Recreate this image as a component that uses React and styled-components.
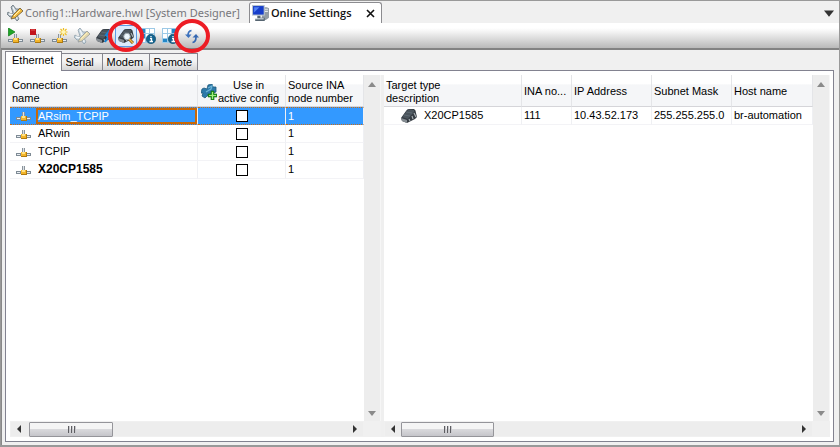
import React, { useState } from 'react';
import styled, { createGlobalStyle, css } from 'styled-components';

const GlobalStyle = createGlobalStyle`
  *, *::before, *::after { box-sizing: border-box; }
  html, body, #root { height: 100%; }
  body {
    margin: 0;
    background: #f0f0f0;
    color: #000;
    font: 11px/13px "Liberation Sans", Arial, sans-serif;
  }
  button, input { font: inherit; color: inherit; margin: 0; padding: 0; }
`;

const Window = styled.main`
  display: flex;
  flex-direction: column;
  height: 100vh;
  border: 1px solid #999;
  border-bottom-width: 2px;
  background: #f0f0f0;
`;

const DocumentTabs = styled.nav`
  display: flex;
  align-items: flex-end;
  flex: none;
  height: 22px;
  padding: 1px 5px 0;
  font: 11px/20px "Noto Sans", "Open Sans", sans-serif;
`;

const DocumentTab = styled.button`
  display: flex;
  align-items: center;
  gap: 2px;
  height: 21px;
  border: 1px solid transparent;
  border-bottom: 0;
  background: none;
  color: #77777b;
  white-space: nowrap;
  ${p => p.$active && css`
    margin-left: 8px;
    padding: 0 4px 0 2px;
    border-color: #8c8c90;
    border-radius: 3px 3px 0 0;
    background: #fff;
    color: #111;
    font-family: "Open Sans", sans-serif;
    font-weight: 600;
  `}
`;

const CloseMark = styled.svg`
  margin-left: 9px;
`;

const TabListButton = styled.button`
  display: flex;
  align-items: center;
  height: 21px;
  margin-left: auto;
  border: 0;
  background: none;
`;

const Toolbar = styled.div`
  display: flex;
  align-items: center;
  flex: none;
  height: 27px;
  padding: 0 4px;
  border-bottom: 2px solid #828282;
  background: linear-gradient(#fff 20%, #f1f1f1 38%, #b9b9b9);
`;

const ToolButton = styled.button`
  position: relative;
  display: grid;
  place-items: center;
  width: 22px;
  height: 22px;
  border: 1px solid ${p => (p.$pressed ? '#5b9be6' : 'transparent')};
  background: ${p => (p.$pressed ? '#dcebfc' : 'none')};
`;

const HighlightRing = styled.span`
  position: absolute;
  z-index: 2;
  inset: ${p => (p.$large ? '-7px -8px' : '-6px -8px')};
  border: 4px solid #ed1c24;
  border-radius: 50%;
  pointer-events: none;
`;

const Body = styled.section`
  display: flex;
  flex-direction: column;
  flex: 1;
  min-height: 0;
  padding: 1px 5px 3px 3px;
  border-left: 1px solid #888;
`;

const PageTabs = styled.div`
  display: flex;
  align-items: flex-end;
  flex: none;
  height: 19px;
`;

const PageTab = styled.button`
  min-width: 47px;
  height: 17px;
  padding: 0 5px 0 4px;
  border: 1px solid #85858d;
  border-width: 1px 1px 0 0;
  background: linear-gradient(#f3f3f3 45%, #d6d6d6);
  text-align: left;
  &:nth-child(2) { min-width: 41px; }
  ${p => p.$active && css`
    z-index: 1;
    height: 20px;
    margin-bottom: -1px;
    padding: 0 7px 2px 6px;
    border-left-width: 1px;
    background: #fff;
  `}
`;

const Page = styled.div`
  display: flex;
  flex: 1;
  min-height: 0;
  padding: 4px 3px 4px 4px;
  border: 1px solid #828290;
  background: #fff;
`;

const Pane = styled.div`
  display: grid;
  grid-template-columns: minmax(0, 1fr) 17px;
  grid-template-rows: minmax(0, 1fr) 16px;
  min-width: 0;
  flex: ${p => (p.$fixed ? '0 0 371px' : '1')};
`;

const Splitter = styled.div`
  flex: none;
  width: 3px;
  background: #efefef;
`;

const Table = styled.table`
  align-self: start;
  width: 100%;
  border-collapse: separate;
  border-spacing: 0;
  table-layout: fixed;
`;

const Col = styled.col`
  width: ${p => (p.$width ? `${p.$width}px` : 'auto')};
`;

const HeadCell = styled.th`
  height: 32px;
  padding: 2px 2px 0 ${p => (p.$first ? 2 : 3)}px;
  border-right: 1px solid #e4e5e8;
  border-bottom: 1px solid #d5d5d9;
  background: linear-gradient(#fff 30%, #f5f6f8 31%);
  font-weight: 400;
  text-align: ${p => (p.$center ? 'center' : 'left')};
  white-space: nowrap;
`;

const WithIcon = styled.div`
  display: flex;
  align-items: center;
  gap: 1px;
`;

const Cell = styled.td`
  height: 18px;
  padding: 0 0 0 ${p => p.$indent ?? 2}px;
  border-right: 1px solid #eff0f3;
  border-bottom: 1px solid #f3f3f6;
  text-align: ${p => (p.$center ? 'center' : 'left')};
  white-space: nowrap;
`;

const Row = styled.tr`
  ${p => p.$selected && css`
    color: #fff;
    background: #39f;
    ${Cell} {
      border-bottom: 1px dotted #c86c18;
      border-top: 1px dotted #c86c18;
    }
  `}
`;

const NameCell = styled.div`
  display: flex;
  align-items: center;
  height: ${p => (p.$focused ? 16 : 17)}px;
  gap: ${p => p.$gap ?? 4}px;
  svg { flex: none; }
`;

const NameText = styled.span`
  flex: 1;
  height: 17px;
  padding-left: 2px;
  line-height: 17px;
  ${p => p.$bold && css`
    font-weight: 700;
    font-size: 12px;
  `}
  ${p => p.$focused && css`
    height: 16px;
    padding-left: 0;
    border: 2px solid #c86808;
    line-height: 12px;
  `}
`;

const CheckBox = styled.input`
  appearance: none;
  display: block;
  width: 12px;
  height: 12px;
  margin: 0 auto;
  border: 1px solid #000;
  background: #fff;
  &:checked { box-shadow: inset 0 0 0 2px #fff; background: #000; }
`;

const Track = styled.div`
  display: flex;
  align-items: center;
  justify-content: space-between;
  background: #ededed;
  ${p => p.$vertical
    ? css`flex-direction: column; border-right: 1px solid #f6f6f6;`
    : css`border: 1px solid #f0f0f0;`}
`;

const ArrowButton = styled.button`
  display: grid;
  place-items: center;
  width: 16px;
  height: ${p => (p.$vertical ? 17 : 14)}px;
  flex: none;
  border: 0;
  background: none;
`;

const Thumb = styled.button`
  display: grid;
  place-items: center;
  width: ${p => p.$size}px;
  height: 15px;
  margin: 0 auto 0 ${p => p.$offset}px;
  flex: none;
  border: 1px solid #95959a;
  border-radius: 1px;
  background: linear-gradient(#f5f5f5 45%, #d9d9dc 50%, #c5c5ca);
`;

const Corner = styled.div`
  background: #f0f0f0;
`;

const ARROWS = {
  up: 'M4 2 8 7H0Z',
  down: 'M0 2H8L4 7Z',
  left: 'M6 0V8L2 4Z',
  right: 'M2 0 6 4 2 8Z',
};

const Arrow = ({ dir, color = '#707070', size = 8 }) => (
  <svg width={size} height={size} viewBox="0 0 8 8" aria-hidden="true">
    <path d={ARROWS[dir]} fill={color} />
  </svg>
);

function HScroll({ size, offset = 2 }) {
  return (
    <Track>
      <ArrowButton aria-label="Scroll left"><Arrow dir="left" color="#333" /></ArrowButton>
      <Thumb $size={size} $offset={offset} aria-label="Horizontal position">
        <svg width="9" height="7" aria-hidden="true" shapeRendering="crispEdges">
          <path d="M1.500 0V7M4.500 0V7M7.500 0V7" stroke="#5e5e62" />
          <path d="M2.500 0V7M5.500 0V7M8.500 0V7" stroke="#c9c9cd" />
        </svg>
      </Thumb>
      <ArrowButton aria-label="Scroll right"><Arrow dir="right" color="#333" /></ArrowButton>
    </Track>
  );
}

function VScroll() {
  return (
    <Track $vertical>
      <ArrowButton $vertical aria-label="Scroll up"><Arrow dir="up" color="#8a8a8a" /></ArrowButton>
      <ArrowButton $vertical aria-label="Scroll down"><Arrow dir="down" color="#8a8a8a" /></ArrowButton>
    </Track>
  );
}

const Icon = ({ children, size = 16 }) => (
  <svg width={size} height={size} viewBox="0 0 16 16" aria-hidden="true">{children}</svg>
);

const NodeShape = () => (
  <g shapeRendering="crispEdges">
    <rect x="6" y="6" width="3" height="5" fill="#8b949b" />
    <rect x="7" y="6" width="1" height="4" fill="#dbe1e6" />
    <rect x="0" y="11" width="15" height="3" fill="#7f8b95" />
    <rect x="1" y="12" width="3" height="1" fill="#e9eef2" />
    <rect x="11" y="12" width="3" height="1" fill="#e9eef2" />
    <rect x="5" y="10" width="6" height="5" fill="#b07a10" />
    <rect x="5" y="10" width="5" height="4" fill="#f3b52a" />
    <rect x="6" y="10" width="3" height="2" fill="#ffe184" />
  </g>
);

const ConnectionIcon = () => (
  <svg width="16" height="12" viewBox="0 4 16 12" aria-hidden="true"><NodeShape /></svg>
);

const ConnectIcon = () => (
  <Icon><NodeShape /><path d="M.5 0V8L7 4Z" fill="#20a526" stroke="#0c7c16" strokeWidth=".7" /></Icon>
);

const DisconnectIcon = () => (
  <Icon><NodeShape /><rect x="0" y="1" width="6" height="6" fill="#c3161d" /><path d="M1 2H5" stroke="#e05a5a" /></Icon>
);

const NewConnectionIcon = () => (
  <Icon>
    <NodeShape />
    <path d="M11.500 0V8M7.500 4H15.500M8.500 1 14.500 7M14.500 1 8.500 7" stroke="#eebf24" strokeWidth="1.200" />
    <circle cx="11.500" cy="4" r="2" fill="#fff6b8" />
  </Icon>
);

const WrenchIcon = ({ muted }) => (
  <Icon>
    <path d="M4 2 6 0 9 4 12 4 13 7 10 10 12 14 10 16 7 12 3 12 0 9 1 7 4 9 6 8Z" fill={muted ? '#c9d7e0' : '#b4bfc7'} stroke={muted ? '#8fa0ab' : '#67737b'} strokeWidth=".8" />
    <path d="M6 2 9 9 10 14M2 9 6 10" fill="none" stroke="#f3f7f9" strokeWidth="1.300" />
    <path d="M13 3 16 6 8 13 4 14 6 10Z" fill={muted ? '#e5d9ae' : '#f2ba3c'} stroke={muted ? '#91989a' : '#655636'} strokeWidth=".8" />
    <path d="M7 11 13 5" stroke="#fff2bb" />
  </Icon>
);

const DeviceShape = () => (
  <g>
    <path d="M5 3Q6 1 8 1L13 1Q15 2 15 5L16 9 14 11 6 15 1 13 0 10Z" fill="#343b42" />
    <path d="M6 3 8 1.500 13 2 13 4 7 11 1 9Z" fill="#4b555d" />
    <path d="M5 4 11 5M3 7 9 8" stroke="#66727b" strokeWidth=".7" />
    <path d="M0 10 6 12 6 15 1 13Z" fill="#858c92" />
    <path d="M8 11 9 13M11 8 12 11M13 5 15 9" stroke="#a8b0b5" strokeWidth="1.200" />
  </g>
);

const DeviceLinkIcon = () => (
  <Icon><DeviceShape /><path d="M15 1 10 7 13 8 9 14" fill="none" stroke="#1485d8" strokeWidth="2" /></Icon>
);

const BrowseIcon = () => (
  <Icon>
    <DeviceShape />
    <path d="m11 11 4 4" stroke="#805312" strokeWidth="3" />
    <path d="m11 11 4 4" stroke="#f2bb4b" strokeWidth="1.500" />
    <circle cx="9" cy="8.500" r="3.200" fill="#edf7fd" stroke="#a3adb4" />
  </Icon>
);

const GridInfoIcon = ({ faded }) => (
  <Icon>
    <rect x="0" y="0" width="15" height="15" fill="#9cc9e6" />
    <g fill={faded ? '#fff' : '#2387c8'}>
      <rect x="1" y="1" width="4" height="4" /><rect x="1" y="6" width="4" height="4" />
    </g>
    <g fill="#fff">
      <rect x="6" y="1" width="3" height="4" /><rect x="10" y="1" width="4" height="4" />
      <rect x="6" y="6" width="3" height="4" /><rect x="10" y="6" width="4" height="4" /><rect x="1" y="11" width="4" height="3" />
    </g>
    {faded && <path d="M10 1H14V5H10ZM1 11H5V14H1Z" fill="#2387c8" />}
    <circle cx="11" cy="11" r="4.700" fill="#12638f" stroke="#0d4768" strokeWidth=".6" />
    <path d="M11 8V9M10 10.500H11.500V13M9.500 13.500H13" fill="none" stroke="#fff" strokeWidth="1.300" />
  </Icon>
);

const RefreshIcon = () => (
  <Icon>
    <path d="M7.500 2.500Q4 3 4 7.500" fill="none" stroke="#3c72bd" strokeWidth="1.700" />
    <path d="M1 6.500H7.500L4.500 10Z" fill="#3c72bd" />
    <path d="M8.500 14.500Q12 14 12 9" fill="none" stroke="#3568b2" strokeWidth="1.700" />
    <path d="M8.500 9.500H15L12 6Z" fill="#3568b2" />
  </Icon>
);

const ComputersIcon = () => (
  <Icon size={17}>
    <path d="M10 2H14L16 3V12L13 14H9Z" fill="#929ca4" />
    <path d="M12 4H15M12 6H15" stroke="#e6ebee" />
    <rect x="0" y="0" width="12" height="10" fill="#b8c4cf" />
    <rect x="1" y="1" width="10" height="8" fill="#163dca" />
    <path d="M2 2H7L2 7Z" fill="#5484f4" />
    <path d="M5 10H8V12H12V15H3V13H5Z" fill="#566571" />
    <path d="M3 13H11" stroke="#dce5ea" />
  </Icon>
);

const AddConfigIcon = () => (
  <Icon>
    <path d="M3 4 6 5 7 1 11 0 12 3 15 3 15 8 12 9 11 12 7 11 4 14 1 12 2 9 0 9 1 5Z" fill="#2d7aaa" stroke="#205a7c" strokeWidth=".8" />
    <path d="M7 4 11 2 10 5 5 8" fill="none" stroke="#6eb5d8" strokeWidth="1.200" />
    <path d="M10 7H13V10H16V13H13V16H10V13H7V10H10Z" fill="#26991f" stroke="#126616" strokeWidth=".6" />
    <path d="M11.500 8V15M8 11.500H15" stroke="#a5ee82" strokeWidth="1.200" />
  </Icon>
);

const DeviceIcon = () => <Icon><DeviceShape /></Icon>;

const TOOLS = [
  { label: 'Connect', icon: <ConnectIcon /> },
  { label: 'Disconnect', icon: <DisconnectIcon /> },
  { label: 'New connection', icon: <NewConnectionIcon /> },
  { label: 'Configure', icon: <WrenchIcon muted /> },
  { label: 'Link target', icon: <DeviceLinkIcon /> },
  { label: 'Browse for targets', icon: <BrowseIcon />, pressed: true, ring: 'small' },
  { label: 'Column information', icon: <GridInfoIcon /> },
  { label: 'Row information', icon: <GridInfoIcon faded /> },
  { label: 'Refresh', icon: <RefreshIcon />, ring: 'large' },
];

const PAGES = ['Ethernet', 'Serial', 'Modem', 'Remote'];

const CONNECTIONS = [
  { name: 'ARsim_TCPIP', node: 1 },
  { name: 'ARwin', node: 1 },
  { name: 'TCPIP', node: 1 },
  { name: 'X20CP1585', node: 1, bold: true },
];

const TARGETS = [
  { type: 'X20CP1585', ina: '111', ip: '10.43.52.173', mask: '255.255.255.0', host: 'br-automation' },
];

function ConnectionTable() {
  const [selected, setSelected] = useState('ARsim_TCPIP');
  return (
    <Table>
      <colgroup><Col $width={188} /><Col $width={88} /><Col /></colgroup>
      <thead>
        <tr>
          <HeadCell $first>Connection<br />name</HeadCell>
          <HeadCell $center>
            <WithIcon><AddConfigIcon /><span>Use in<br />active config</span></WithIcon>
          </HeadCell>
          <HeadCell $first>Source INA<br />node number</HeadCell>
        </tr>
      </thead>
      <tbody>
        {CONNECTIONS.map(c => {
          const focused = c.name === selected;
          return (
            <Row key={c.name} $selected={focused} onClick={() => setSelected(c.name)}>
              <Cell $indent={6}>
                <NameCell $focused={focused}>
                  <ConnectionIcon />
                  <NameText $bold={c.bold} $focused={focused}>{c.name}</NameText>
                </NameCell>
              </Cell>
              <Cell $center $indent={0}><CheckBox type="checkbox" aria-label={`Use ${c.name} in active config`} /></Cell>
              <Cell>{c.node}</Cell>
            </Row>
          );
        })}
      </tbody>
    </Table>
  );
}

function TargetTable() {
  return (
    <Table>
      <colgroup><Col $width={138} /><Col $width={50} /><Col $width={80} /><Col $width={80} /><Col /></colgroup>
      <thead>
        <tr>
          <HeadCell $first>Target type<br />description</HeadCell>
          <HeadCell $first>INA no...</HeadCell>
          <HeadCell $first>IP Address</HeadCell>
          <HeadCell $first>Subnet Mask</HeadCell>
          <HeadCell $first>Host name</HeadCell>
        </tr>
      </thead>
      <tbody>
        {TARGETS.map(t => (
          <Row key={t.ip}>
            <Cell $indent={17}><NameCell $gap={5}><DeviceIcon /><NameText>{t.type}</NameText></NameCell></Cell>
            <Cell>{t.ina}</Cell>
            <Cell>{t.ip}</Cell>
            <Cell>{t.mask}</Cell>
            <Cell>{t.host}</Cell>
          </Row>
        ))}
      </tbody>
    </Table>
  );
}

export default function App() {
  const [page, setPage] = useState('Ethernet');
  return (
    <>
      <GlobalStyle />
      <Window>
        <DocumentTabs aria-label="Open documents">
          <DocumentTab><WrenchIcon />Config1::Hardware.hwl [System Designer]</DocumentTab>
          <DocumentTab $active>
            <ComputersIcon />Online Settings
            <CloseMark width="14" height="9" viewBox="0 0 14 9" aria-hidden="true">
              <path d="M4 1 11 8M11 1 4 8" stroke="#111" strokeWidth="1.600" />
            </CloseMark>
          </DocumentTab>
          <TabListButton aria-label="List open documents"><Arrow dir="down" color="#333" size={10} /></TabListButton>
        </DocumentTabs>
        <Toolbar role="toolbar">
          {TOOLS.map(t => (
            <ToolButton key={t.label} aria-label={t.label} $pressed={t.pressed}>
              {t.icon}
              {t.ring && <HighlightRing $large={t.ring === 'large'} />}
            </ToolButton>
          ))}
        </Toolbar>
        <Body>
          <PageTabs role="tablist">
            {PAGES.map(p => (
              <PageTab key={p} role="tab" aria-selected={p === page} $active={p === page} onClick={() => setPage(p)}>{p}</PageTab>
            ))}
          </PageTabs>
          <Page role="tabpanel" aria-label={page}>
            <Pane $fixed>
              <ConnectionTable />
              <VScroll />
              <HScroll size={84} />
              <Corner />
            </Pane>
            <Splitter />
            <Pane>
              <TargetTable />
              <VScroll />
              <HScroll size={93} offset={0} />
              <Corner />
            </Pane>
          </Page>
        </Body>
      </Window>
    </>
  );
}
